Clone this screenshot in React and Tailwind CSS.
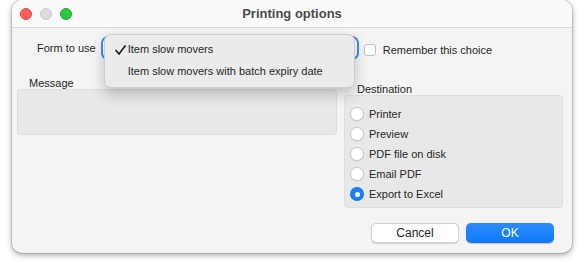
import { useState } from "react";

const DESTINATIONS = ["Printer", "Preview", "PDF file on disk", "Email PDF", "Export to Excel"];

const FORMS = ["Item slow movers", "Item slow movers with batch expiry date"];

function Radio({ checked }) {
  return checked ? (
    <span className="w-[14px] h-[14px] rounded-full bg-[#1b7ffa] flex items-center justify-center shadow-[inset_0_0_0_1px_rgba(0,0,0,0.08)]">
      <span className="w-[5px] h-[5px] rounded-full bg-white" />
    </span>
  ) : (
    <span className="w-[14px] h-[14px] rounded-full bg-white border border-[#c9c9c9] shadow-[0_0.5px_1px_rgba(0,0,0,0.1)]" />
  );
}

export default function App() {
  const [destination, setDestination] = useState("Export to Excel");
  const [form] = useState(FORMS[0]);

  return (
    <div className="w-[584px] h-[265px] bg-white overflow-hidden font-['Liberation_Sans',Arial,sans-serif] text-[#262626]">
      <div className="ml-[12px] w-[560px] h-[253px] rounded-[10px] bg-[#f4f4f4] shadow-[0_2px_6px_rgba(0,0,0,0.35),0_0_0_1px_rgba(0,0,0,0.12)] flex flex-col">
        {/* title bar */}
        <div className="h-[28px] shrink-0 grid grid-cols-[1fr_auto_1fr] items-center border-b border-[#dadada] bg-[#fafafa] rounded-t-[10px]">
          <div className="flex items-center gap-[8px] pl-[8px]">
            <span className="w-[12px] h-[12px] rounded-full bg-[#fe5f57] border border-[#e2463f]" />
            <span className="w-[12px] h-[12px] rounded-full bg-[#dcdcdc] border border-[#cbcbcb]" />
            <span className="w-[12px] h-[12px] rounded-full bg-[#28c840] border border-[#1aab29]" />
          </div>
          <div className="text-[13px] font-bold text-[#4b4b4b]">Printing options</div>
          <div />
        </div>

        {/* form row */}
        <div className="mt-[10px] h-[20px] flex items-center pl-[25px]">
          <span className="text-[11px] leading-[13px]">Form to use</span>
          <div className="relative ml-[7px] w-[254px] h-[20px] rounded-[5px] bg-white shadow-[0_0_0_2px_#3f8cf5]">
            <div className="absolute left-[1px] top-[-4px] w-[251px] h-[54px] z-10 rounded-[7px] bg-[#ebebeb] border border-[#cdcdcd] shadow-[0_6px_14px_rgba(0,0,0,0.22)] pt-[3px]">
              {FORMS.map((item) => (
                <div key={item} className="relative h-[22px] flex items-center pl-[23px] text-[11px]">
                  {item === form && (
                    <svg
                      className="absolute left-[10px] top-[7px]"
                      width="11"
                      height="10"
                      viewBox="0 0 11 10"
                      fill="none"
                    >
                      <path d="M1 5.5 L4 9 L10 1" stroke="#1f1f1f" strokeWidth="1.7" strokeLinecap="round" strokeLinejoin="round" />
                    </svg>
                  )}
                  {item}
                </div>
              ))}
            </div>
          </div>
          <label className="ml-[7px] pt-[4px] flex items-center gap-[7px] text-[11px]">
            <span className="w-[12px] h-[12px] rounded-[3px] bg-white border border-[#bdbdbd]" />
            Remember this choice
          </label>
        </div>

        {/* message / destination */}
        <div className="mt-[19px] flex gap-[7px] pl-[5px]">
          <div className="w-[320px]">
            <div className="pl-[12px] h-[12px] text-[11px] leading-[12px]">Message</div>
            <div className="h-[46px] rounded-[4px] bg-[#e8e8e8] border border-[#dedede]" />
          </div>
          <div className="w-[219px] mt-[6px]">
            <div className="pl-[13px] h-[12px] text-[11px] leading-[12px]">Destination</div>
            <div className="h-[113px] rounded-[4px] bg-[#e8e8e8] border border-[#dedede] pt-[8px] pl-[5px] flex flex-col">
              {DESTINATIONS.map((item) => (
                <button
                  key={item}
                  onClick={() => setDestination(item)}
                  className="h-[20px] flex items-center gap-[5px] text-[11px] text-left"
                >
                  <Radio checked={destination === item} />
                  {item}
                </button>
              ))}
            </div>
          </div>
        </div>

        {/* buttons */}
        <div className="mt-[15px] flex justify-end gap-[7px] pr-[18px]">
          <button className="w-[88px] h-[20px] rounded-[5px] bg-white border border-[#d2d2d2] shadow-[0_0.5px_1px_rgba(0,0,0,0.15)] text-[12px] text-[#262626]">
            Cancel
          </button>
          <button className="w-[88px] h-[20px] rounded-[5px] bg-gradient-to-b from-[#2a8cfc] to-[#0f78fa] text-[12px] text-white shadow-[0_0.5px_1px_rgba(0,0,0,0.2)]">
            OK
          </button>
        </div>
      </div>
    </div>
  );
}
